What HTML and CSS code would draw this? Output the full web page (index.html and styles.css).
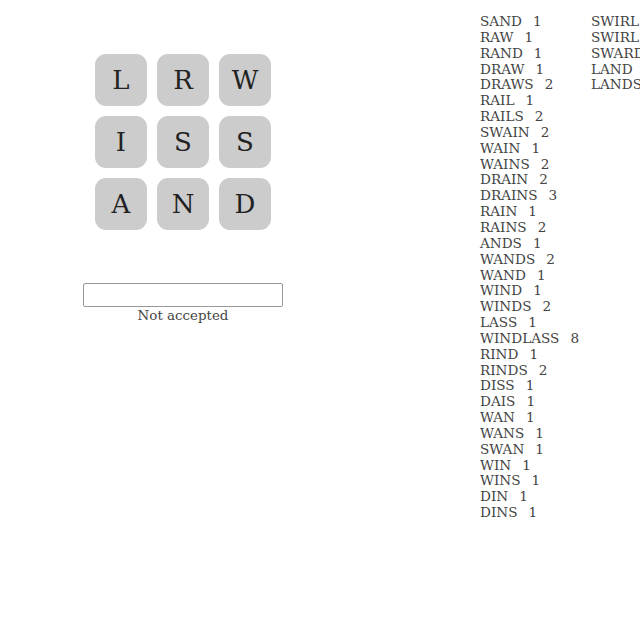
FILE: index.html
```html
<!DOCTYPE html>
<html>
<head>
<meta charset="utf-8">
<link rel="stylesheet" href="styles.css">
</head>
<body>
<div class="app">
  <section class="play">
    <div class="board">
      <div class="tile">L</div><div class="tile">R</div><div class="tile">W</div>
      <div class="tile">I</div><div class="tile">S</div><div class="tile">S</div>
      <div class="tile">A</div><div class="tile">N</div><div class="tile">D</div>
    </div>
    <input class="entry" type="text" autofocus>
    <div class="status">Not accepted</div>
  </section>
  <ul class="words">
    <li><span>SAND</span><span>1</span></li>
    <li><span>RAW</span><span>1</span></li>
    <li><span>RAND</span><span>1</span></li>
    <li><span>DRAW</span><span>1</span></li>
    <li><span>DRAWS</span><span>2</span></li>
    <li><span>RAIL</span><span>1</span></li>
    <li><span>RAILS</span><span>2</span></li>
    <li><span>SWAIN</span><span>2</span></li>
    <li><span>WAIN</span><span>1</span></li>
    <li><span>WAINS</span><span>2</span></li>
    <li><span>DRAIN</span><span>2</span></li>
    <li><span>DRAINS</span><span>3</span></li>
    <li><span>RAIN</span><span>1</span></li>
    <li><span>RAINS</span><span>2</span></li>
    <li><span>ANDS</span><span>1</span></li>
    <li><span>WANDS</span><span>2</span></li>
    <li><span>WAND</span><span>1</span></li>
    <li><span>WIND</span><span>1</span></li>
    <li><span>WINDS</span><span>2</span></li>
    <li><span>LASS</span><span>1</span></li>
    <li><span>WINDLASS</span><span>8</span></li>
    <li><span>RIND</span><span>1</span></li>
    <li><span>RINDS</span><span>2</span></li>
    <li><span>DISS</span><span>1</span></li>
    <li><span>DAIS</span><span>1</span></li>
    <li><span>WAN</span><span>1</span></li>
    <li><span>WANS</span><span>1</span></li>
    <li><span>SWAN</span><span>1</span></li>
    <li><span>WIN</span><span>1</span></li>
    <li><span>WINS</span><span>1</span></li>
    <li><span>DIN</span><span>1</span></li>
    <li><span>DINS</span><span>1</span></li>
    <li><span>SWIRL</span><span>1</span></li>
    <li><span>SWIRLS</span><span>2</span></li>
    <li><span>SWARD</span><span>1</span></li>
    <li><span>LAND</span><span>1</span></li>
    <li><span>LANDS</span><span>2</span></li>
  </ul>
</div>
</body>
</html>
```
FILE: styles.css
```css
html, body {
  margin: 0;
  padding: 0;
  background: #fff;
  overflow: hidden;
}
body {
  font-family: "DejaVu Serif", serif;
  color: #444;
}
.app {
  display: flex;
  align-items: flex-start;
  height: 640px;
}
.play {
  width: 200px;
  margin-left: 83px;
  margin-top: 54px;
  display: flex;
  flex-direction: column;
  align-items: center;
}
.board {
  display: grid;
  grid-template-columns: repeat(3, 52px);
  grid-auto-rows: 52px;
  gap: 10px;
}
.tile {
  background: #cccccc;
  border-radius: 11px;
  display: flex;
  align-items: center;
  justify-content: center;
  font-size: 26px;
  color: #222;
}
.entry {
  margin-top: 53px;
  width: 200px;
  height: 24px;
  box-sizing: border-box;
  border: 1px solid #999;
  border-radius: 2px;
  padding: 1px 4px;
  font-family: "DejaVu Serif", serif;
  font-size: 13.6px;
  outline: none;
}
.status {
  font-size: 13.4px;
  margin-top: 1px;
}
.words {
  list-style: none;
  margin: 14px 0 0 197px;
  padding: 0;
  display: flex;
  flex-direction: column;
  flex-wrap: wrap;
  align-content: flex-start;
  height: 515px;
  font-size: 13.6px;
  line-height: 15.84px;
}
.words li {
  width: 111px;
  display: flex;
  gap: 11px;
  white-space: nowrap;
}
```
